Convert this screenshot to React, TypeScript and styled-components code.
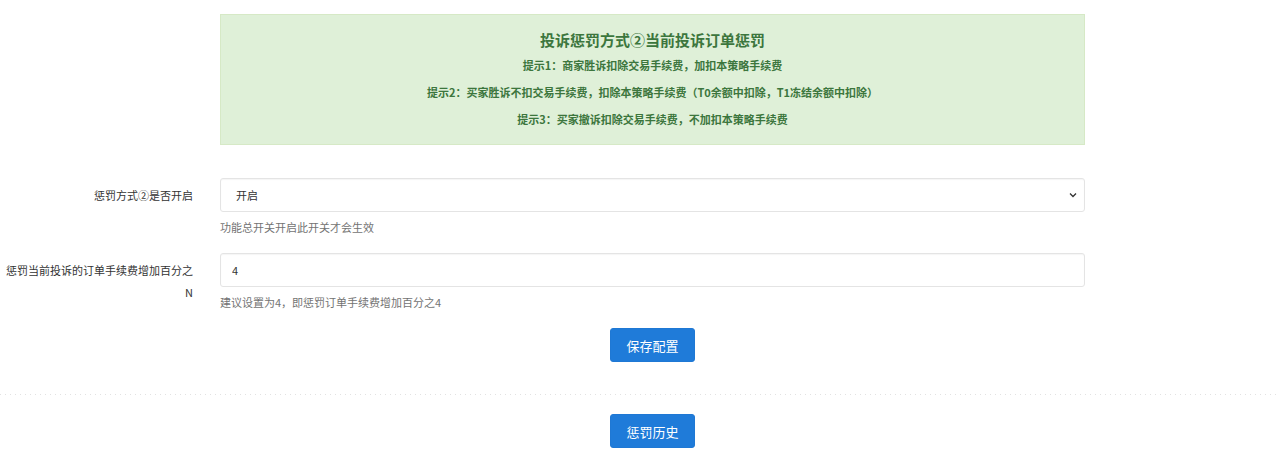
import React from "react";
import styled, { createGlobalStyle } from "styled-components";

const Global = createGlobalStyle`
  html, body { margin: 0; padding: 0; background: #fff; }
  body { font-family: "Noto Sans CJK SC", "Microsoft YaHei", sans-serif; color: #333; }
  * { box-sizing: border-box; }
`;

const Page = styled.div`
  width: 1280px;
  padding-top: 14px;
`;

const Alert = styled.div`
  margin-left: 220px;
  width: 865px;
  height: 131px;
  background: #dff0d8;
  border: 1px solid #d6e9c6;
  color: #3c763d;
  text-align: center;
  padding-top: 14px;
`;

const AlertTitle = styled.div`
  font-size: 15px;
  font-weight: 700;
  line-height: 22px;
  margin-bottom: 1px;
`;

const AlertLine = styled.div`
  font-size: 11px;
  font-weight: 700;
  line-height: 27px;
`;

const Form = styled.div`
  margin-top: 33px;
`;

const Group = styled.div<{ $gap?: number }>`
  display: flex;
  margin-bottom: ${(p) => p.$gap ?? 17}px;
`;

const Label = styled.div`
  width: 220px;
  flex: none;
  padding: 6px 27px 0 3px;
  font-size: 11px;
  line-height: 22px;
  text-align: right;
  color: #333;
`;

const Control = styled.div`
  width: 865px;
  display: flex;
  flex-direction: column;
`;

const fieldCss = `
  width: 100%;
  height: 34px;
  border: 1px solid #e4e4e4;
  border-radius: 3px;
  background: #fff;
  font-family: "Noto Sans CJK SC", sans-serif;
  font-size: 11px;
  color: #333;
  outline: none;
`;

const SelectBox = styled.div`
  ${fieldCss}
  display: flex;
  align-items: center;
  justify-content: space-between;
  padding: 0 6px 0 15px;
  box-shadow: inset 0 1px 1px rgba(0,0,0,0.04);
`;

const Input = styled.input`
  ${fieldCss}
  padding: 0 11px;
  box-shadow: inset 0 1px 1px rgba(0,0,0,0.04);
`;

const Help = styled.div`
  margin-top: 7px;
  font-size: 11px;
  line-height: 17px;
  color: #737373;
`;

const BtnRow = styled.div`
  display: flex;
  justify-content: center;
  width: 865px;
  margin-left: 220px;
`;

const Button = styled.button`
  height: 34px;
  padding: 0 15px;
  border: 1px solid #1f78d4;
  border-radius: 3px;
  background: #1f7bd9;
  color: #fff;
  font-family: "Noto Sans CJK SC", sans-serif;
  font-size: 13px;
  cursor: pointer;
`;

const Divider = styled.div`
  height: 1px;
  margin: 32px 0 19px;
  background: repeating-linear-gradient(to right, #e2e2e2 0 1px, transparent 1px 5px);
`;

export default function App() {
  return (
    <Page>
      <Global />
      <Alert>
        <AlertTitle>投诉惩罚方式②当前投诉订单惩罚</AlertTitle>
        <AlertLine>提示1：商家胜诉扣除交易手续费，加扣本策略手续费</AlertLine>
        <AlertLine>提示2：买家胜诉不扣交易手续费，扣除本策略手续费（T0余额中扣除，T1冻结余额中扣除）</AlertLine>
        <AlertLine>提示3：买家撤诉扣除交易手续费，不加扣本策略手续费</AlertLine>
      </Alert>
      <Form>
        <Group>
          <Label>惩罚方式②是否开启</Label>
          <Control>
            <SelectBox>
              <span>开启</span>
              <svg width="10" height="10" viewBox="0 0 10 10">
                <path d="M2 3.5 L5 6.5 L8 3.5" fill="none" stroke="#333" strokeWidth="1.3" />
              </svg>
            </SelectBox>
            <Help>功能总开关开启此开关才会生效</Help>
          </Control>
        </Group>
        <Group>
          <Label>惩罚当前投诉的订单手续费增加百分之N</Label>
          <Control>
            <Input defaultValue="4" />
            <Help>建议设置为4，即惩罚订单手续费增加百分之4</Help>
          </Control>
        </Group>
        <BtnRow>
          <Button>保存配置</Button>
        </BtnRow>
        <Divider />
        <BtnRow>
          <Button>惩罚历史</Button>
        </BtnRow>
      </Form>
    </Page>
  );
}
